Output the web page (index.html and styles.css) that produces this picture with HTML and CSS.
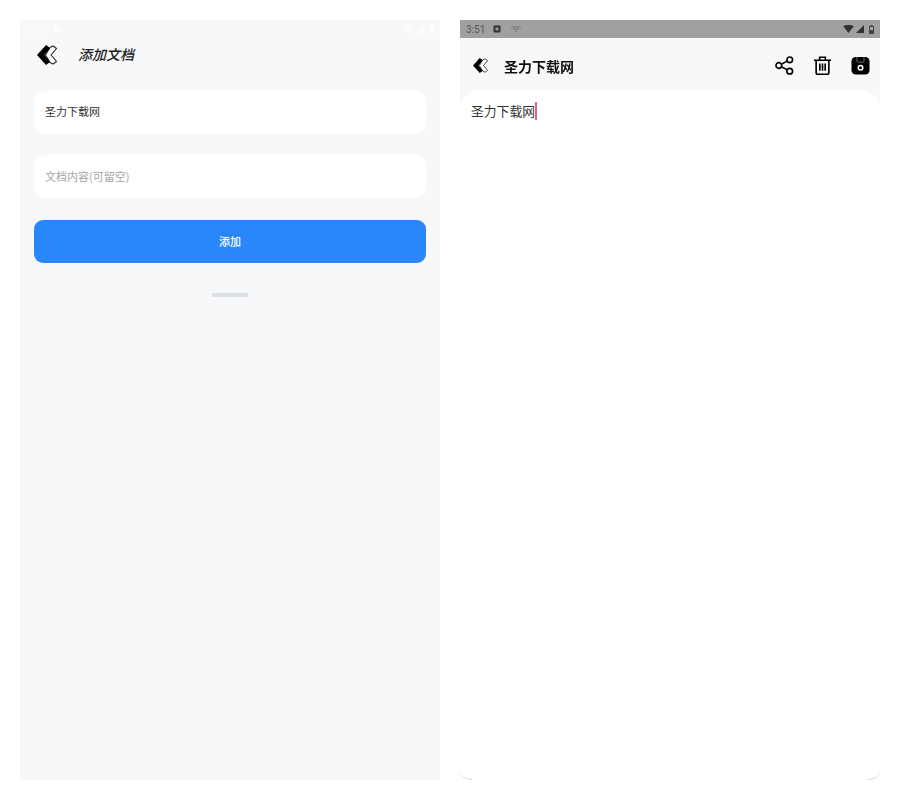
FILE: index.html
```html
<!DOCTYPE html>
<html lang="zh">
<head>
<meta charset="utf-8">
<title>添加文档</title>
<link rel="stylesheet" href="styles.css">
</head>
<body>
<main class="screens">
  <section class="phone phone-add">
    <div class="status status-faint">
      <span class="status-left"><span>3:51</span><svg class="s-a" viewBox="0 0 8 8"><rect x="1" y="1" width="6" height="6" rx="1" fill="currentColor"/></svg></span>
      <span class="status-right">
        <svg class="s-wifi" viewBox="0 0 12 9"><path d="M0 1.500C3.500-.5 8.500-.5 12 1.500L6 9Z" fill="currentColor"/></svg>
        <svg class="s-cell" viewBox="0 0 9 9"><path d="M9 0V9H0Z" fill="currentColor"/></svg>
        <svg class="s-bat" viewBox="0 0 5 9"><path d="M1.500 0h2v1H5v8H0V1h1.500Z" fill="currentColor"/></svg>
      </span>
    </div>
    <header class="add-head">
      <svg class="back back-lg" viewBox="0 0 20 20"><path d="M13 2.500 16 1l3.500 2.500L14 10l5.500 6.500L16 19l-3-1.500L8.500 10Z" fill="#fff" stroke="#222" stroke-width="1.100" stroke-linejoin="round"/><path d="M9 0 0 10l9 10 4-3-5.500-7L13 3Z" fill="#000"/></svg>
      <h1 class="add-title">添加文档</h1>
    </header>
    <div class="form">
      <div class="field">圣力下载网</div>
      <div class="field field-empty">文档内容(可留空)</div>
      <div class="submit">添加</div>
      <div class="handle"></div>
    </div>
  </section>

  <section class="phone phone-edit">
    <div class="status status-grey">
      <span class="status-left"><span>3:51</span><svg class="s-a" viewBox="0 0 8 8"><rect x=".5" y=".5" width="7" height="7" rx="1" fill="#333"/><rect x="2.500" y="2.500" width="3" height="3" fill="#999"/></svg><svg class="s-w" viewBox="0 0 10 6"><path d="M0 1h10M2 3h6M4 5h2" stroke="currentColor" fill="none"/></svg></span>
      <span class="status-right">
        <svg class="s-wifi" viewBox="0 0 12 9"><path d="M0 1.500C3.500-.5 8.500-.5 12 1.500L6 9Z" fill="#333"/></svg>
        <svg class="s-cell" viewBox="0 0 9 9"><path d="M9 0V9H0Z" fill="#333"/></svg>
        <svg class="s-bat" viewBox="0 0 5 9"><path d="M1.500 0h2v1H5v8H0V1h1.500Z" fill="#444"/><rect x="1" y="2" width="3" height="3" fill="#aaa"/></svg>
      </span>
    </div>
    <header class="edit-head">
      <svg class="back back-sm" viewBox="0 0 20 20"><path d="M13 2.500 16 1l3.500 2.500L14 10l5.500 6.500L16 19l-3-1.500L8.500 10Z" fill="#fff" stroke="#222" stroke-width="1.100" stroke-linejoin="round"/><path d="M9 0 0 10l9 10 4-3-5.500-7L13 3Z" fill="#000"/></svg>
      <h2 class="edit-title">圣力下载网</h2>
      <div class="actions">
        <svg class="act" viewBox="0 0 20 20" fill="none" stroke="#000" stroke-width="1.700"><circle cx="4" cy="10" r="3"/><circle cx="15.500" cy="4" r="3"/><circle cx="15.500" cy="16" r="3"/><path d="M6.800 8.600l6-3.200M6.800 11.400l6 3.200"/></svg>
        <svg class="act" viewBox="0 0 20 20" fill="none" stroke="#000" stroke-width="1.700"><path d="M1 4.500h18M7 4.500V1.300h6v3.200M3.300 4.500v13a1.700 1.700 0 0 0 1.700 1.700h10a1.700 1.700 0 0 0 1.700-1.700v-13"/><path d="M7.200 8v7.500M10 8v7.500M12.800 8v7.500"/></svg>
        <svg class="act" viewBox="0 0 20 20"><rect x=".5" y="1" width="19" height="18.500" rx="4.500" fill="#000"/><path d="M6.300 1v4a1.500 1.500 0 0 0 1.500 1.500h4.400A1.500 1.500 0 0 0 13.700 5V1" fill="none" stroke="#777" stroke-width="1"/><circle cx="10" cy="12.300" r="2.400" fill="none" stroke="#fff" stroke-width="1.600"/></svg>
      </div>
    </header>
    <div class="sheet">
      <p class="doc">圣力下载网<span class="caret"></span></p>
      <span class="corner corner-l"></span>
      <span class="corner corner-r"></span>
    </div>
  </section>
</main>
</body>
</html>
```

FILE: styles.css
```css
* { box-sizing: border-box; }
html, body { height: 100%; }
body {
  margin: 0;
  background: #fff;
  font-family: "Noto Sans CJK SC", "Roboto", sans-serif;
  overflow: hidden;
}
h1, h2, p { margin: 0; font-weight: normal; }
svg { display: block; flex: none; }

.screens {
  display: grid;
  grid-template-columns: 420px 420px;
  gap: 20px;
  padding: 20px;
  height: 800px;
  filter: blur(.4px);
}
.phone {
  display: flex;
  flex-direction: column;
  height: 760px;
  background: #f6f8fa;
  overflow: hidden;
}

.status {
  height: 18px;
  flex: none;
  display: flex;
  justify-content: space-between;
  align-items: center;
  padding: 0 6px;
  font-family: "Roboto", sans-serif;
  font-size: 10px;
}
.status-faint { background: #f6f8fa; color: #fdfdfe; }
.status-grey { background: #a0a0a0; color: #555; }
.status-left, .status-right { display: flex; align-items: center; }
.status-left { gap: 8px; }
.status-right { gap: 2px; }
.s-a { width: 8px; height: 8px; }
.s-w { width: 10px; height: 6px; opacity: .6; margin-left: 2px; }
.s-wifi { width: 11px; height: 8px; }
.s-cell { width: 8px; height: 8px; }
.s-bat { width: 5px; height: 9px; margin-left: 3px; }

.add-head {
  display: flex;
  align-items: center;
  height: 34px;
  padding-left: 17px;
  flex: none;
}
.back-lg { width: 20px; height: 20px; }
.add-title {
  margin-left: 21px;
  font-size: 14px;
  line-height: 30px;
  height: 32px;
  font-weight: 500;
  font-style: italic;
  color: #222;
}

.form {
  display: flex;
  flex-direction: column;
  gap: 21px;
  padding: 19px 14px 0;
}
.field {
  height: 43px;
  display: flex;
  align-items: center;
  padding: 0 11px 3px;
  background: #fff;
  border-radius: 11px;
  font-size: 11px;
  color: #333;
}
.field-empty { padding-bottom: 1px; color: #a6a6a6; }
.submit {
  height: 43px;
  margin-top: 1px;
  padding-bottom: 2px;
  display: flex;
  align-items: center;
  justify-content: center;
  background: #2787fb;
  border-radius: 9px;
  color: #fff;
  font-size: 11px;
  font-weight: 500;
}
.handle {
  width: 36px;
  height: 4px;
  margin: 9px auto 0;
  border-radius: 2px;
  background: #dcdfe3;
}

.edit-head {
  height: 52px;
  flex: none;
  display: flex;
  align-items: center;
  padding: 3px 10px 0 13px;
}
.back-sm { width: 15px; height: 15px; }
.edit-title {
  margin-left: 16px;
  font-size: 14px;
  font-weight: 700;
  color: #111;
}
.actions {
  margin-left: auto;
  display: flex;
  gap: 19px;
}
.act { width: 19px; height: 19px; }

.sheet {
  position: relative;
  flex: 1;
  background: #fff;
  border-radius: 20px 20px 0 0;
  padding: 12px 11px;
}
.doc {
  display: flex;
  align-items: center;
  font-size: 12.800px;
  line-height: 18px;
  color: #333;
}
.caret {
  width: 2px;
  height: 18px;
  background: #e8608e;
}
.corner {
  position: absolute;
  bottom: 0;
  width: 12px;
  height: 9px;
  border-bottom: 1px solid #d0d0d0;
}
.corner-l { left: 0; border-bottom-left-radius: 12px 9px; }
.corner-r { right: 0; border-bottom-right-radius: 12px 9px; }
```
